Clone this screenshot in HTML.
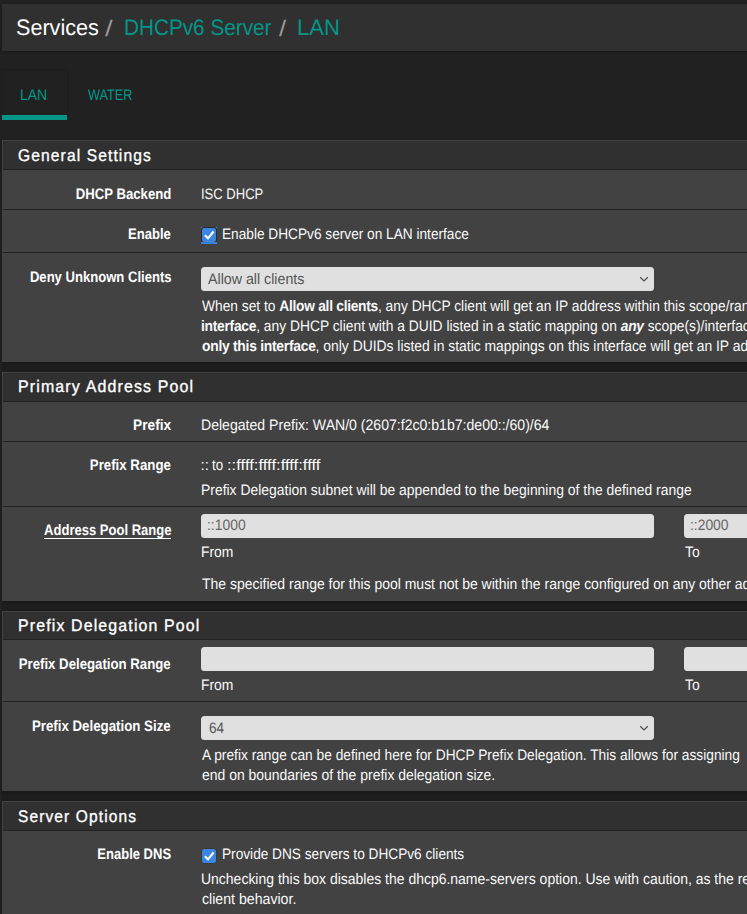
<!DOCTYPE html>
<html><head><meta charset="utf-8"><title>Services / DHCPv6 Server / LAN</title>
<style>
html,body{margin:0;padding:0}
body{width:747px;height:914px;overflow:hidden;position:relative;background:#212121;font-family:"Liberation Sans",sans-serif}
.crumb{position:absolute;left:2px;top:4px;width:800px;height:47px;background:#303030;box-shadow:0 1px 3px rgba(0,0,0,.25)}
.tab{position:absolute;left:2px;top:71px;width:65px;height:44px;background:#212121;box-shadow:0 0 3px rgba(0,0,0,.25)}
.tabline{position:absolute;left:2px;top:115px;width:65px;height:5px;background:#009688}
.pb{position:absolute;left:2px;width:800px;background:#424242;box-shadow:0 1px 3px rgba(0,0,0,.2)}
.ph{position:absolute;left:3px;width:800px;background:#303030}
.sep{position:absolute;left:3px;width:800px;height:1px;background:#222222}
.gap{position:absolute;left:2px;width:800px;background:#1d1d1d}
.inp{position:absolute;background:#e0e0e0;border-radius:3.5px}
.chev{position:absolute}
.t{position:absolute;white-space:nowrap;line-height:20px;transform-origin:left center;text-rendering:geometricPrecision}
.t b{font-weight:bold;letter-spacing:-0.3px}
</style></head><body>
<div class='crumb'></div><div class='tab'></div><div class='tabline'></div><div class='gap' style='top:362px;height:10px'></div><div class='gap' style='top:601px;height:10px'></div><div class='gap' style='top:791px;height:10px'></div><div class='pb' style='top:140px;height:222px'></div><div class='ph' style='top:141px;height:28px'></div><div class='sep' style='top:169px'></div><div class='sep' style='top:209px'></div><div class='sep' style='top:252px'></div><div class='pb' style='top:372px;height:229px'></div><div class='ph' style='top:373px;height:28px'></div><div class='sep' style='top:401px'></div><div class='sep' style='top:441px'></div><div class='sep' style='top:506px'></div><div class='pb' style='top:611px;height:180px'></div><div class='ph' style='top:612px;height:27px'></div><div class='sep' style='top:639px'></div><div class='sep' style='top:701px'></div><div class='pb' style='top:801px;height:129px'></div><div class='ph' style='top:802px;height:28px'></div><div class='sep' style='top:830px'></div>
<svg style='position:absolute;left:199px;top:225px' width='20' height='20' viewBox='0 0 20 20'><rect x='2' y='2' width='16' height='15.6' rx='2.5' fill='#2c2a28'/><rect x='2' y='17.1' width='16' height='1.9' fill='#3b86e0'/><circle cx='2.5' cy='2.5' r='0.8' fill='#3b86e0'/><circle cx='17.5' cy='2.5' r='0.8' fill='#3b86e0'/><rect x='3' y='3' width='14' height='14' rx='2.2' fill='#3b86e0'/><path d='M5.9 10.2 L9 13.3 L14.6 6.5' fill='none' stroke='#fff' stroke-width='2.1' stroke-linecap='butt'/></svg><div class='inp' style='left:201px;top:267px;width:453px;height:24px'></div><svg class='chev' style='left:638.8px;top:276.2px' width='10' height='7' viewBox='0 0 10 7'><path d='M1.2 1.3 L5 5 L8.8 1.3' fill='none' stroke='#505050' stroke-width='1.25'/></svg><div class='inp' style='left:201px;top:514px;width:453px;height:24px'></div><div class='inp' style='left:684px;top:514px;width:100px;height:24px'></div><div class='inp' style='left:201px;top:647px;width:453px;height:24px'></div><div class='inp' style='left:684px;top:647px;width:100px;height:24px'></div><div class='inp' style='left:201px;top:716px;width:453px;height:24px'></div><svg class='chev' style='left:638.8px;top:725px' width='10' height='7' viewBox='0 0 10 7'><path d='M1.2 1.3 L5 5 L8.8 1.3' fill='none' stroke='#505050' stroke-width='1.25'/></svg><svg style='position:absolute;left:199px;top:846px' width='20' height='20' viewBox='0 0 20 20'><rect x='2.3' y='2.3' width='15.4' height='15.4' rx='3' fill='#36322e' opacity='0.6'/><rect x='3' y='3' width='14' height='14' rx='2.2' fill='#3b86e0'/><path d='M5.9 10.2 L9 13.3 L14.6 6.5' fill='none' stroke='#fff' stroke-width='2.1' stroke-linecap='butt'/></svg>
<div style='position:absolute;left:44px;top:538px;width:127px;height:1px;background:#fff'></div>
<div class='t' style='left:16.24px;top:18.00px;font-size:22.4px;font-weight:normal;letter-spacing:0px;color:#ffffff;transform:scaleX(0.9647);'>Services</div>
<div class='t' style='left:104.80px;top:18.80px;font-size:22.4px;font-weight:normal;letter-spacing:0px;color:#9a9a9a;transform:scaleX(1.2286);transform-origin:left bottom;'>/</div>
<div class='t' style='left:124.47px;top:18.00px;font-size:22.4px;font-weight:normal;letter-spacing:0px;color:#009688;transform:scaleX(0.9259);'>DHCPv6 Server</div>
<div class='t' style='left:278.80px;top:18.80px;font-size:22.4px;font-weight:normal;letter-spacing:0px;color:#9a9a9a;transform:scaleX(1.1429);transform-origin:left bottom;'>/</div>
<div class='t' style='left:297.02px;top:18.00px;font-size:22.4px;font-weight:normal;letter-spacing:0px;color:#009688;transform:scaleX(0.9829);'>LAN</div>
<div class='t' style='left:20.38px;top:86.00px;font-size:15.2px;font-weight:normal;letter-spacing:0px;color:#009688;transform:scaleX(0.9214);'>LAN</div>
<div class='t' style='left:88.30px;top:86.00px;font-size:15.2px;font-weight:normal;letter-spacing:0px;color:#009688;transform:scaleX(0.8377);'>WATER</div>
<div class='t' style='left:18.40px;top:145.50px;font-size:16.8px;font-weight:normal;letter-spacing:1.2px;color:#ffffff;transform:scaleX(0.9287);-webkit-text-stroke:0.35px #fff;'>General Settings</div>
<div class='t' style='left:17.65px;top:377.00px;font-size:16.8px;font-weight:normal;letter-spacing:1.2px;color:#ffffff;transform:scaleX(0.9508);-webkit-text-stroke:0.35px #fff;'>Primary Address Pool</div>
<div class='t' style='left:17.65px;top:615.80px;font-size:16.8px;font-weight:normal;letter-spacing:1.2px;color:#ffffff;transform:scaleX(0.9484);-webkit-text-stroke:0.35px #fff;'>Prefix Delegation Pool</div>
<div class='t' style='left:18.00px;top:806.80px;font-size:16.8px;font-weight:normal;letter-spacing:1.2px;color:#ffffff;transform:scaleX(0.9250);-webkit-text-stroke:0.35px #fff;'>Server Options</div>
<div class='t' style='right:575.74px;top:185.00px;font-size:15.2px;font-weight:bold;letter-spacing:0px;color:#ffffff;transform:scaleX(0.8661);transform-origin:right center;'>DHCP Backend</div>
<div class='t' style='right:576.16px;top:225.00px;font-size:15.2px;font-weight:bold;letter-spacing:0px;color:#ffffff;transform:scaleX(0.8592);transform-origin:right center;'>Enable</div>
<div class='t' style='right:575.52px;top:268.00px;font-size:15.2px;font-weight:bold;letter-spacing:0px;color:#ffffff;transform:scaleX(0.8607);transform-origin:right center;'>Deny Unknown Clients</div>
<div class='t' style='right:575.80px;top:416.00px;font-size:15.2px;font-weight:bold;letter-spacing:0px;color:#ffffff;transform:scaleX(0.9024);transform-origin:right center;'>Prefix</div>
<div class='t' style='right:576.12px;top:456.00px;font-size:15.2px;font-weight:bold;letter-spacing:0px;color:#ffffff;transform:scaleX(0.8728);transform-origin:right center;'>Prefix Range</div>
<div class='t' style='right:575.54px;top:521.00px;font-size:15.2px;font-weight:bold;letter-spacing:0px;color:#ffffff;transform:scaleX(0.8581);transform-origin:right center;'>Address Pool Range</div>
<div class='t' style='right:576.26px;top:655.20px;font-size:15.2px;font-weight:bold;letter-spacing:0px;color:#ffffff;transform:scaleX(0.8701);transform-origin:right center;'>Prefix Delegation Range</div>
<div class='t' style='right:576.27px;top:717.20px;font-size:15.2px;font-weight:bold;letter-spacing:0px;color:#ffffff;transform:scaleX(0.8747);transform-origin:right center;'>Prefix Delegation Size</div>
<div class='t' style='right:575.92px;top:845.10px;font-size:15.2px;font-weight:bold;letter-spacing:0px;color:#ffffff;transform:scaleX(0.8565);transform-origin:right center;'>Enable DNS</div>
<div class='t' style='left:200.74px;top:185.00px;font-size:15.2px;font-weight:normal;letter-spacing:0px;color:#fafafa;transform:scaleX(0.8577);'>ISC DHCP</div>
<div class='t' style='left:221.70px;top:225.00px;font-size:15.2px;font-weight:normal;letter-spacing:0px;color:#fafafa;transform:scaleX(0.9000);'>Enable DHCPv6 server on LAN interface</div>
<div class='t' style='left:208.00px;top:270.10px;font-size:15.2px;font-weight:normal;letter-spacing:0px;color:#555555;transform:scaleX(0.9359);'>Allow all clients</div>
<div class='t' style='left:201.60px;top:297.20px;font-size:15.2px;font-weight:normal;letter-spacing:0px;color:#fafafa;transform:scaleX(0.9065);'>When set to <b>Allow all clients</b>, any DHCP client will get an IP address within this scope/range on this interface. If set to <b>Allow known clients from any</b></div>
<div class='t' style='left:200.69px;top:317.30px;font-size:15.2px;font-weight:normal;letter-spacing:0px;color:#fafafa;transform:scaleX(0.9100);'><b>interface</b>, any DHCP client with a DUID listed in a static mapping on <b><i>any</i></b> scope(s)/interface(s) will get an IP address. If set to <b>Allow known clients from</b></div>
<div class='t' style='left:201.60px;top:337.10px;font-size:15.2px;font-weight:normal;letter-spacing:0px;color:#fafafa;transform:scaleX(0.9140);'><b>only this interface</b>, only DUIDs listed in static mappings on this interface will get an IP address within this scope/range.</div>
<div class='t' style='left:200.77px;top:416.00px;font-size:15.2px;font-weight:normal;letter-spacing:0px;color:#fafafa;transform:scaleX(0.9267);'>Delegated Prefix: WAN/0 (2607:f2c0:b1b7:de00::/60)/64</div>
<div class='t' style='left:200.60px;top:456.10px;font-size:15.2px;font-weight:normal;letter-spacing:0px;color:#fafafa;transform:scaleX(1.0000);'>::</div>
<div class='t' style='left:212.00px;top:456.10px;font-size:15.2px;font-weight:normal;letter-spacing:0px;color:#fafafa;transform:scaleX(0.8769);'>to</div>
<div class='t' style='left:226.60px;top:456.10px;font-size:15.2px;font-weight:normal;letter-spacing:0px;color:#fafafa;transform:scaleX(1.0953);'>::ffff:ffff:ffff:ffff</div>
<div class='t' style='left:200.78px;top:481.20px;font-size:15.2px;font-weight:normal;letter-spacing:0px;color:#fafafa;transform:scaleX(0.9165);'>Prefix Delegation subnet will be appended to the beginning of the defined range</div>
<div class='t' style='left:207.49px;top:516.20px;font-size:15.2px;font-weight:normal;letter-spacing:0px;color:#666666;transform:scaleX(0.9146);'>::1000</div>
<div class='t' style='left:689.89px;top:516.40px;font-size:15.2px;font-weight:normal;letter-spacing:0px;color:#666666;transform:scaleX(0.9122);'>::2000</div>
<div class='t' style='left:200.79px;top:542.90px;font-size:15.2px;font-weight:normal;letter-spacing:0px;color:#fafafa;transform:scaleX(0.9140);'>From</div>
<div class='t' style='left:684.70px;top:542.90px;font-size:15.2px;font-weight:normal;letter-spacing:0px;color:#fafafa;transform:scaleX(0.9140);'>To</div>
<div class='t' style='left:201.70px;top:575.10px;font-size:15.2px;font-weight:normal;letter-spacing:0px;color:#fafafa;transform:scaleX(0.9200);'>The specified range for this pool must not be within the range configured on any other address pool for this interface.</div>
<div class='t' style='left:200.79px;top:676.20px;font-size:15.2px;font-weight:normal;letter-spacing:0px;color:#fafafa;transform:scaleX(0.9140);'>From</div>
<div class='t' style='left:684.70px;top:676.20px;font-size:15.2px;font-weight:normal;letter-spacing:0px;color:#fafafa;transform:scaleX(0.9140);'>To</div>
<div class='t' style='left:208.50px;top:719.20px;font-size:15.2px;font-weight:normal;letter-spacing:0px;color:#555555;transform:scaleX(0.8941);'>64</div>
<div class='t' style='left:201.70px;top:746.30px;font-size:15.2px;font-weight:normal;letter-spacing:0px;color:#fafafa;transform:scaleX(0.9046);'>A prefix range can be defined here for DHCP Prefix Delegation. This allows for assigning</div>
<div class='t' style='left:201.70px;top:766.00px;font-size:15.2px;font-weight:normal;letter-spacing:0px;color:#fafafa;transform:scaleX(0.9186);'>end on boundaries of the prefix delegation size.</div>
<div class='t' style='left:221.80px;top:845.10px;font-size:15.2px;font-weight:normal;letter-spacing:0px;color:#fafafa;transform:scaleX(0.8996);'>Provide DNS servers to DHCPv6 clients</div>
<div class='t' style='left:200.78px;top:870.00px;font-size:15.2px;font-weight:normal;letter-spacing:0px;color:#fafafa;transform:scaleX(0.9200);'>Unchecking this box disables the dhcp6.name-servers option. Use with caution, as the resulting behavior may violate RFCs and lead to unintended</div>
<div class='t' style='left:201.70px;top:890.00px;font-size:15.2px;font-weight:normal;letter-spacing:0px;color:#fafafa;transform:scaleX(0.9310);'>client behavior.</div>
</body></html>
